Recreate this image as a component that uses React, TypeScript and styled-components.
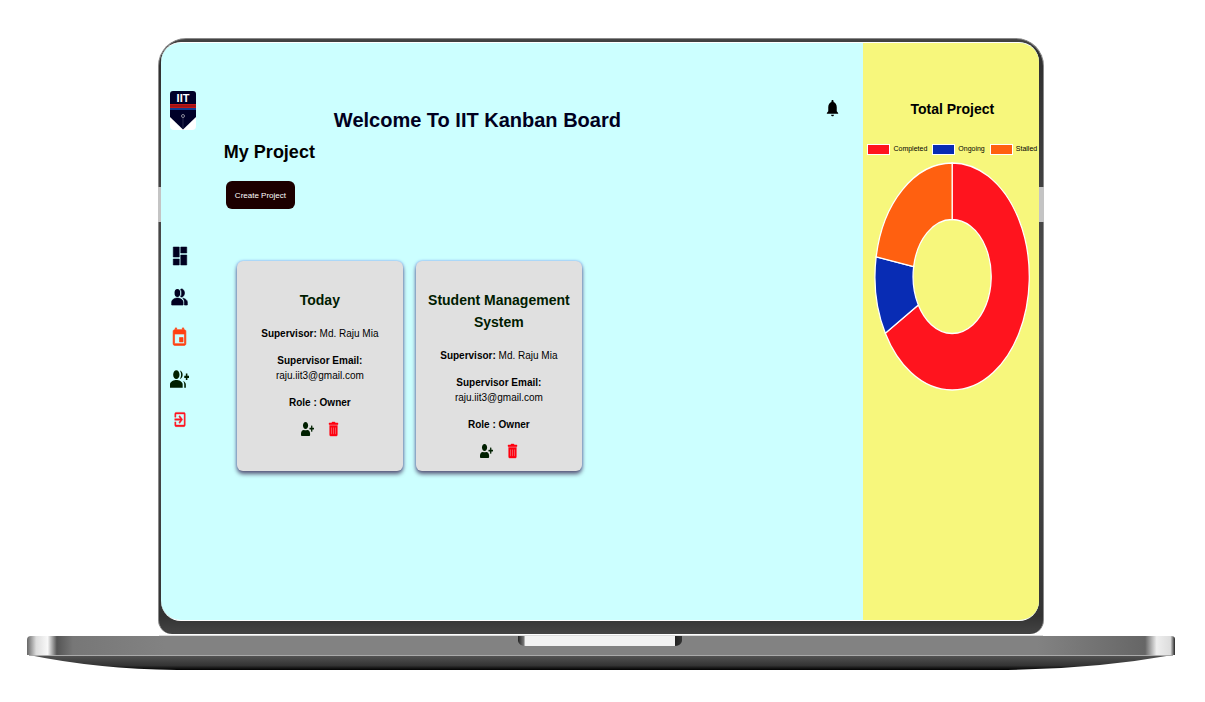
import React from 'react';
import styled, { createGlobalStyle } from 'styled-components';
import { MdDashboard, MdPeopleAlt, MdEvent, MdGroupAdd, MdExitToApp, MdNotifications } from 'react-icons/md';
import { FaUserPlus, FaTrashAlt } from 'react-icons/fa';

const GlobalStyle = createGlobalStyle`
  * { box-sizing: border-box; }
  body {
    margin: 0;
    background: #fff;
    color: #000;
    font-family: "Liberation Sans", Arial, sans-serif;
    font-size: 10px;
  }
  h1, h2, h3, p { margin: 0; }
  button { font: inherit; cursor: pointer; }
`;

const Laptop = styled.div`
  padding: 38px 30px 24px 27px;
`;

const Lid = styled.div`
  position: relative;
  margin: 0 11.4% 0 11.4%;
  padding: 3px 4px 13px 2px;
  border: 1px solid #8a8a8a;
  border-bottom: 0;
  border-radius: 28px 28px 14px 14px;
  background: linear-gradient(#454545, #2f2f2f 2%, #555 50%, #333 97%, #444);
`;

const AntennaBand = styled.span<{ $side: 'left' | 'right' }>`
  position: absolute;
  top: 148px;
  ${p => p.$side}: -1px;
  width: ${p => (p.$side === 'left' ? 3 : 5)}px;
  height: 35px;
  background: #c4c4c4;
`;

const Screen = styled.div`
  display: flex;
  min-height: 579px;
  overflow: hidden;
  border-top: 1px solid #fff;
  border-bottom: 1px solid #fff;
  border-radius: 20px;
  background: #ccffff;
`;

const Sidebar = styled.nav`
  display: flex;
  flex-direction: column;
  align-items: center;
  width: 38px;
  padding-top: 48px;
`;

const LogoLink = styled.a`
  display: block;
  width: 26px;
  height: 39px;
  margin: 0 0 105px 6px;
`;

const NavItem = styled.a<{ $color: string }>`
  display: flex;
  align-items: center;
  height: 41px;
  color: ${p => p.$color};
`;

const Glyph = styled.span<{ $w: number; $h: number; $weight?: number }>`
  display: flex;

  svg {
    width: ${p => p.$w}px;
    height: ${p => p.$h}px;
    stroke: none;
    overflow: visible;
  }

  path:not([fill='none']) {
    stroke: ${p => (p.$weight ? 'currentColor' : 'none')};
    stroke-width: ${p => p.$weight ?? 0};
  }
`;

const Main = styled.main`
  flex: 1;
  padding: 55px 22px 24px 25px;
`;

const TopBar = styled.header`
  display: flex;
  align-items: flex-start;
  justify-content: space-between;
  height: 40px;
`;

const Title = styled.h1`
  flex: 1;
  padding: 8px 0 0 110px;
  color: #000020;
  font-size: 20px;
  line-height: 28px;
  white-space: nowrap;
`;

const BellButton = styled.button`
  display: flex;
  padding: 0;
  border: 0;
  background: none;
  color: #000;
`;

const SectionTitle = styled.h2`
  font-size: 18px;
  line-height: 28px;
`;

const CreateButton = styled.button`
  height: 28px;
  margin: 15px 0 0 2px;
  padding: 0 9px;
  border: 0;
  border-radius: 6px;
  background: #1c0000;
  color: #fff;
  font-size: 8px;
`;

const Cards = styled.div`
  display: flex;
  flex-wrap: wrap;
  gap: 13px;
  margin: 52px 0 0 13px;
`;

const Card = styled.article`
  width: 166px;
  min-height: 210px;
  padding: 28px 8px 12px;
  border-radius: 6px;
  background: #e0e0e0;
  box-shadow: 0 3px 4px #5a5a78, 0 0 3px #7fa8ff;
  text-align: center;
`;

const CardTitle = styled.h3`
  margin-bottom: 15px;
  color: #001c00;
  font-size: 14px;
  line-height: 22px;
`;

const Field = styled.p`
  margin-bottom: 12px;
  font-size: 10px;
  line-height: 15px;
`;

const Actions = styled.div`
  display: flex;
  justify-content: center;
  gap: 15px;
`;

const IconButton = styled.button<{ $color: string }>`
  display: flex;
  padding: 0;
  border: 0;
  background: none;
  color: ${p => p.$color};
`;

const Summary = styled.aside`
  width: 20%;
  padding: 54px 0 0 2px;
  background: #f7f77c;
  text-align: center;
`;

const SummaryTitle = styled.h2`
  font-size: 14px;
  line-height: 24px;
`;

const Legend = styled.ul`
  display: flex;
  justify-content: center;
  gap: 5px;
  margin: 22px 0 0;
  padding: 0;
  list-style: none;
  font-size: 7px;
  line-height: 12px;
`;

const LegendItem = styled.li`
  display: flex;
  align-items: center;
  gap: 3px;
`;

const Swatch = styled.span<{ $color: string }>`
  width: 23px;
  height: 11px;
  border: 1px solid #fff;
  background: ${p => p.$color};
`;

const Chart = styled.svg`
  display: block;
  width: 90%;
  height: 229px;
  margin: 7px auto 0;
`;

const Base = styled.svg`
  display: block;
  width: 100%;
  height: 37px;
`;

const statuses = [
  { label: 'Completed', color: '#ff141e', count: 6 },
  { label: 'Ongoing', color: '#082cb4', count: 1 },
  { label: 'Stalled', color: '#ff6010', count: 2 },
];

const navItems = [
  { label: 'Dashboard', color: '#000020', Icon: MdDashboard, w: 18, h: 24, weight: 0.6 },
  { label: 'Members', color: '#000020', Icon: MdPeopleAlt, w: 17, h: 24, weight: 0.8 },
  { label: 'Calendar', color: '#ff4010', Icon: MdEvent, w: 17, h: 21, weight: 0.8 },
  { label: 'Add members', color: '#002000', Icon: MdGroupAdd, w: 19, h: 26, weight: 0 },
  { label: 'Log out', color: '#ff1420', Icon: MdExitToApp, w: 14, h: 19, weight: 0.6 },
];

const projects = ['Today', 'Student Management System'];

function Logo() {
  return (
    <svg width="26" height="39" viewBox="0 0 26 39" role="img" aria-label="IIT">
      <rect width="26" height="39" rx="4" fill="#fff" />
      <path d="M3 0H23Q26 0 26 3V26L13 38.5L0 26V3Q0 0 3 0Z" fill="#000028" />
      <text x="13" y="11" textAnchor="middle" fontSize="11" fontWeight="700" fill="#fff">IIT</text>
      <path d="M0 13H26V17H0Z" fill="#c41818" />
      <path d="M0 15H26" stroke="#801010" />
      <path d="M0 18H26" stroke="#103c90" strokeWidth="2" />
      <circle cx="13" cy="25" r="1.5" fill="none" stroke="#889" />
      <path d="M13 27V37" stroke="#446" strokeWidth="0.6" />
    </svg>
  );
}

function Doughnut() {
  const total = statuses.reduce((sum, s) => sum + s.count, 0);
  const point = (turn: number, rx: number, ry: number) =>
    `${79 + rx * Math.sin(turn * 2 * Math.PI)} ${114.5 - ry * Math.cos(turn * 2 * Math.PI)}`;
  let start = 0;
  return (
    <Chart viewBox="0 0 158 229" preserveAspectRatio="none" role="img" aria-label="Projects by status">
      {statuses.map(s => {
        const from = start;
        const to = start + s.count / total;
        start = to;
        const large = to - from > 0.5 ? 1 : 0;
        return (
          <path
            key={s.label}
            d={`M${point(from, 78, 113.5)}A78 113.5 0 ${large} 1 ${point(to, 78, 113.5)}L${point(to, 39.5, 57)}A39.5 57 0 ${large} 0 ${point(from, 39.5, 57)}Z`}
            fill={s.color}
            stroke="#fff"
            strokeWidth="1.3"
          />
        );
      })}
    </Chart>
  );
}

function LaptopBase() {
  return (
    <Base viewBox="0 0 1148 37" preserveAspectRatio="none" aria-hidden="true">
      <defs>
        <linearGradient id="metal">
          <stop offset="0" stopColor="#666" />
          <stop offset="0.008" stopColor="#ddd" />
          <stop offset="0.018" stopColor="#f8f8f8" />
          <stop offset="0.026" stopColor="#555" />
          <stop offset="0.04" stopColor="#777" />
          <stop offset="0.12" stopColor="#828282" />
          <stop offset="0.88" stopColor="#828282" />
          <stop offset="0.974" stopColor="#666" />
          <stop offset="0.984" stopColor="#eee" />
          <stop offset="0.996" stopColor="#ddd" />
          <stop offset="1" stopColor="#222" />
        </linearGradient>
        <linearGradient id="underside" x2="0" y2="1">
          <stop offset="0" stopColor="#555" />
          <stop offset="0.7" stopColor="#333" />
          <stop offset="1" stopColor="#000" />
        </linearGradient>
        <linearGradient id="notch">
          <stop offset="0" stopColor="#222" />
          <stop offset="0.035" stopColor="#777" />
          <stop offset="0.045" stopColor="#f2f2f2" />
          <stop offset="0.955" stopColor="#f2f2f2" />
          <stop offset="0.96" stopColor="#222" />
          <stop offset="1" stopColor="#333" />
        </linearGradient>
      </defs>
      <path d="M2 21H1146Q1062 36 970 36H150Q70 35 2 21Z" fill="url(#underside)" />
      <path d="M4 2H1144Q1148 2 1148 5V21H0V6Q0 2 4 2Z" fill="url(#metal)" />
      <path d="M132 1.5H1016" stroke="#ddd" />
      <path d="M2 21.5H1146" stroke="#aaa" />
      <path d="M491 2H655V7Q654 12 647 12H499Q492 12 491 7Z" fill="url(#notch)" />
    </Base>
  );
}

export default function App() {
  return (
    <>
      <GlobalStyle />
      <Laptop>
        <Lid>
          <AntennaBand $side="left" />
          <AntennaBand $side="right" />
          <Screen>
            <Sidebar aria-label="Main">
              <LogoLink href="#home"><Logo /></LogoLink>
              {navItems.map(({ label, color, Icon, w, h, weight }) => (
                <NavItem key={label} href="#" aria-label={label} $color={color}>
                  <Glyph $w={w} $h={h} $weight={weight}><Icon preserveAspectRatio="none" /></Glyph>
                </NavItem>
              ))}
            </Sidebar>
            <Main>
              <TopBar>
                <Title>Welcome To IIT Kanban Board</Title>
                <BellButton aria-label="Notifications">
                  <Glyph $w={17} $h={20}><MdNotifications preserveAspectRatio="none" /></Glyph>
                </BellButton>
              </TopBar>
              <SectionTitle>My Project</SectionTitle>
              <CreateButton>Create Project</CreateButton>
              <Cards>
                {projects.map(name => (
                  <Card key={name}>
                    <CardTitle>{name}</CardTitle>
                    <Field><b>Supervisor:</b> Md. Raju Mia</Field>
                    <Field><b>Supervisor Email:</b><br />raju.iit3@gmail.com</Field>
                    <Field><b>Role : Owner</b></Field>
                    <Actions>
                      <IconButton aria-label="Add member" $color="#002000">
                        <Glyph $w={13} $h={14}><FaUserPlus preserveAspectRatio="none" /></Glyph>
                      </IconButton>
                      <IconButton aria-label="Delete project" $color="#ff0010">
                        <Glyph $w={9} $h={14} $weight={16}><FaTrashAlt preserveAspectRatio="none" /></Glyph>
                      </IconButton>
                    </Actions>
                  </Card>
                ))}
              </Cards>
            </Main>
            <Summary>
              <SummaryTitle>Total Project</SummaryTitle>
              <Legend>
                {statuses.map(s => (
                  <LegendItem key={s.label}><Swatch $color={s.color} />{s.label}</LegendItem>
                ))}
              </Legend>
              <Doughnut />
            </Summary>
          </Screen>
        </Lid>
        <LaptopBase />
      </Laptop>
    </>
  );
}
